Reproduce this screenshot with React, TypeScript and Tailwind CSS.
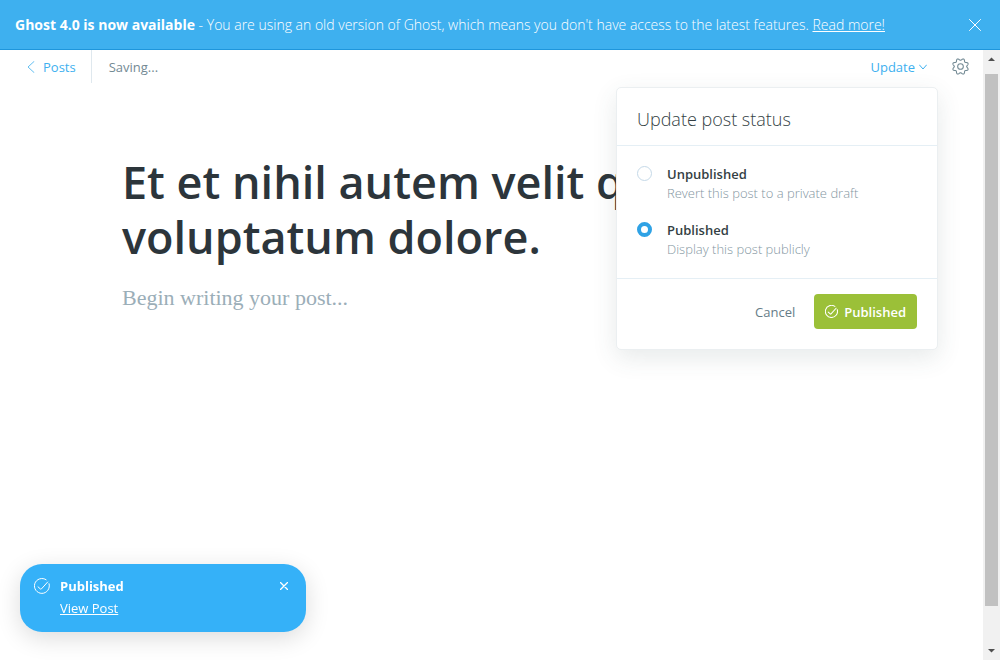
import { useState } from "react";

function CheckCircle({ className }: { className: string }) {
  return (
    <svg viewBox="0 0 24 24" fill="none" stroke="currentColor" strokeLinecap="round" strokeLinejoin="round" className={className} aria-hidden="true">
      <path d="M6 13.2l3.7 3.3a1 1 0 0 0 1.4-.1L20.5 6" />
      <path d="M22.6 8.6A11.2 11.2 0 1 1 18.2 2.6" />
    </svg>
  );
}

function Cross({ className }: { className: string }) {
  return (
    <svg viewBox="0 0 12 12" fill="none" stroke="currentColor" strokeLinecap="round" className={className} aria-hidden="true">
      <path d="M.5.5l11 11M11.5.5l-11 11" />
    </svg>
  );
}

// Eight rounded teeth, with the notches on the axes and the diagonals.
const gearOutline = Array.from({ length: 128 }, (_, i) => {
  const angle = (i / 128) * Math.PI * 2;
  const radius = 10.1 - 1.4 * Math.cos(8 * angle);
  return `${(12 + radius * Math.cos(angle)).toFixed(2)},${(12 + radius * Math.sin(angle)).toFixed(2)}`;
}).join(" ");

function Gear() {
  return (
    <svg viewBox="0 0 24 24" fill="none" stroke="currentColor" strokeWidth="1.5" strokeLinejoin="round" className="size-[17px]" aria-hidden="true">
      <polygon points={gearOutline} />
      <circle cx="12" cy="12" r="4" />
    </svg>
  );
}

function Banner() {
  return (
    <aside className="flex h-[50px] shrink-0 items-center justify-between border-b border-[#1e96dc] bg-[#3eb0ef] pr-[19px] pl-[15px] text-[14px] leading-5 font-[350] text-white">
      <p>
        <b className="font-bold">Ghost 4.0 is now available</b> - You are using an old version of Ghost, which means you don't have access to the latest features.{" "}
        <a href="#read-more" className="underline">Read more!</a>
      </p>
      <button type="button" aria-label="Dismiss">
        <Cross className="size-3" />
      </button>
    </aside>
  );
}

function StatusOption({ id, label, hint, checked, onSelect }: { id: string; label: string; hint: string; checked: boolean; onSelect: () => void }) {
  return (
    <div className="flex gap-[15px]">
      <input
        id={id}
        type="radio"
        name="status"
        checked={checked}
        onChange={onSelect}
        className="mt-px size-[15px] shrink-0 appearance-none rounded-full border border-[#c5d9e8] bg-white checked:border-4 checked:border-[#2fa2e5]"
      />
      <div className="text-[13px] leading-[19px]">
        <label htmlFor={id} className="block font-semibold text-[#343f44]">{label}</label>
        <p className="font-light text-[#84969f]">{hint}</p>
      </div>
    </div>
  );
}

function StatusMenu() {
  const [status, setStatus] = useState("published");
  return (
    <section className="absolute top-[37px] right-[45px] w-[322px] rounded-[5px] border border-[#ebeff1] bg-white shadow-[0_8px_24px_rgba(60,80,85,0.12)]">
      <h2 className="border-b border-[#e5eff5] px-5 pt-[19px] pb-[13px] text-[18px] leading-[25px] font-light text-[#343f44]">Update post status</h2>
      <div className="flex flex-col gap-[18px] border-b border-[#e5eff5] px-5 py-[19px]">
        <StatusOption id="status-draft" label="Unpublished" hint="Revert this post to a private draft" checked={status === "draft"} onSelect={() => setStatus("draft")} />
        <StatusOption id="status-published" label="Published" hint="Display this post publicly" checked={status === "published"} onSelect={() => setStatus("published")} />
      </div>
      <div className="flex items-center justify-end gap-[19px] px-5 pt-[15px] pb-5 text-[13px] leading-5">
        <button type="button" className="text-[#667c87]">Cancel</button>
        <button type="button" className="flex h-[35px] items-center gap-1.5 rounded bg-[#9bc038] px-[11px] font-semibold text-white">
          <CheckCircle className="size-[13px] stroke-2" />
          Published
        </button>
      </div>
    </section>
  );
}

function Toast() {
  return (
    <div role="status" className="fixed bottom-7 left-5 flex h-[68px] w-[286px] gap-2.5 rounded-[22px] bg-[#35b1f8] pt-[11px] pr-4 pl-3.5 text-[13px] leading-[22px] text-white shadow-[0_6px_24px_rgba(0,0,0,0.14)]">
      <CheckCircle className="mt-[3px] size-4 stroke-[1.5]" />
      <div className="flex grow flex-col items-start">
        <b>Published</b>
        <a href="#view-post" className="underline">View Post</a>
      </div>
      <button type="button" aria-label="Close" className="flex h-[22px] items-center px-0.5">
        <Cross className="size-2 stroke-2" />
      </button>
    </div>
  );
}

function ScrollTrack() {
  return (
    <div className="flex w-[17px] shrink-0 flex-col items-center bg-[#f1f1f1] text-[#505050]" aria-hidden="true">
      <svg viewBox="0 0 17 17" fill="currentColor" className="mt-1 mb-[3px] size-[17px]"><path d="M5 7h7L8.5 3.5z" /></svg>
      <div className="w-[13px] grow bg-[#c1c1c1]" />
      <svg viewBox="0 0 17 17" fill="currentColor" className="mt-[37px] size-[17px]"><path d="M5 6h7L8.5 9.5z" /></svg>
    </div>
  );
}

export default function App() {
  return (
    <div className="flex h-screen flex-col overflow-hidden bg-white font-['Open_Sans',sans-serif]">
      <Banner />
      <div className="flex min-h-0 grow">
        <div className="relative min-w-0 grow">
          <header className="flex h-[33px] items-center justify-between pr-3.5 pl-[27px] text-[13px] leading-5">
            <div className="flex h-full items-center gap-[17px]">
              <a href="#posts" className="flex h-full items-center gap-2 border-r border-[#dfe8ee] pr-[15px] text-[#3eb0ef]">
                <svg viewBox="0 0 8 12" fill="none" stroke="currentColor" strokeLinecap="round" className="h-3 w-2 opacity-80" aria-hidden="true"><path d="M7 .5L1 6l6 5.5" /></svg>
                Posts
              </a>
              <span className="text-[#738a94]">Saving...</span>
            </div>
            <div className="flex items-center gap-[25px]">
              <button type="button" className="flex items-center gap-1 text-[#3eb0ef]">
                Update
                <svg viewBox="0 0 8 6" fill="none" stroke="currentColor" strokeLinecap="round" strokeLinejoin="round" className="h-1.5 w-2" aria-hidden="true"><path d="M.5 1L4 5l3.5-4" /></svg>
              </button>
              <button type="button" aria-label="Settings" className="text-[#738a94]"><Gear /></button>
            </div>
          </header>
          <main className="px-[122px] pt-[71px]">
            <h1 className="text-[45px] leading-[55px] font-semibold text-[#2c353b]">Et et nihil autem velit quia voluptatum dolore.</h1>
            <p className="mt-[18px] font-['Liberation_Serif',serif] text-[22px] leading-8 text-[#9baeb8]">Begin writing your post...</p>
          </main>
          <StatusMenu />
        </div>
        <ScrollTrack />
      </div>
      <Toast />
    </div>
  );
}
